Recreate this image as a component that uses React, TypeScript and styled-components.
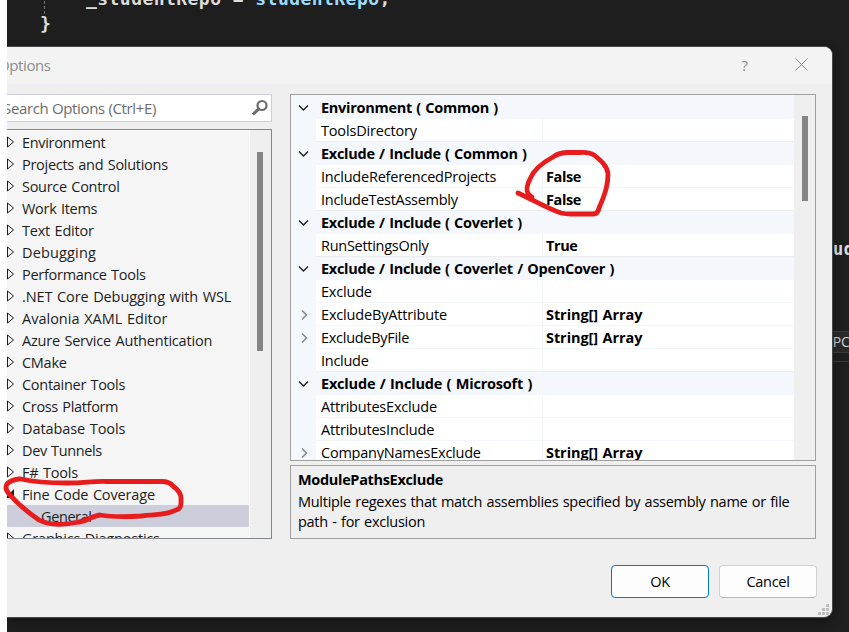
import React from "react";
import styled, { createGlobalStyle } from "styled-components";

const Global = createGlobalStyle`
  * { box-sizing: border-box; }
  html, body { margin: 0; background: #fff; overflow: hidden; }
  body { font-family: "Open Sans", "Noto Sans", sans-serif; font-size: 14.5px; color: #1e1e1e; }
`;

const Page = styled.main`
  position: relative;
  width: 849px;
  height: 632px;
  padding-left: 7px;
  overflow: hidden;
  background: #fff;
`;

const Editor = styled.div`
  position: relative;
  height: 632px;
  background: #1e1e1e;
  overflow: hidden;
`;

const Code = styled.div<{ $x: number; $y: number; $size?: number }>`
  position: absolute;
  left: ${(p) => p.$x}px;
  top: ${(p) => p.$y}px;
  font: 600 ${(p) => p.$size ?? 18}px/24px "DejaVu Sans Mono", monospace;
  letter-spacing: 0.45px;
  color: #dcdcdc;
  white-space: pre;
`;

const Variable = styled.span`
  color: #9cdcfe;
`;

const Guide = styled.div`
  position: absolute;
  left: 37px;
  top: 1px;
  height: 13px;
  border-left: 1px dashed #777;
`;

const Hint = styled.div`
  position: absolute;
  left: 800px;
  top: 331px;
  width: 42px;
  height: 22px;
  padding-left: 18px;
  border: solid #3b3b3e;
  border-width: 1px 0;
  background: #292929;
  color: #d0d0d0;
  font-size: 14px;
  line-height: 20px;
`;

const EditorRule = styled.div`
  position: absolute;
  left: 800px;
  top: 361px;
  width: 42px;
  height: 60px;
  border: solid #3b3b3e;
  border-width: 1px 0 0;
`;

const Dialog = styled.section`
  position: absolute;
  left: 0;
  top: 46px;
  width: 826px;
  height: 572px;
  border: solid #48484a;
  border-width: 1px 1px 1px 0;
  border-radius: 0 9px 9px 0;
  background: #efefef;
  overflow: hidden;
  box-shadow: 0 3px 10px rgba(0, 0, 0, 0.35);
`;

const TitleBar = styled.header`
  display: flex;
  align-items: center;
  height: 37px;
  padding-bottom: 2px;
  background: #f3f3f3;
  color: #8c8c8c;
  font-size: 15px;
`;

const Title = styled.h1`
  flex: 1;
  margin: 0 0 0 -9px;
  font-size: 15px;
  font-weight: 400;
  letter-spacing: -0.4px;
`;

const TitleButtons = styled.div`
  display: flex;
  align-items: center;
  gap: 47px;
  padding-right: 24px;
`;

const Body = styled.div`
  display: grid;
  grid-template-columns: 265px 526px;
  column-gap: 18px;
  padding-top: 10px;
`;

const Side = styled.div`
  display: flex;
  flex-direction: column;
  gap: 7px;
`;

const Search = styled.label`
  display: flex;
  align-items: center;
  justify-content: space-between;
  height: 28px;
  padding-right: 2px;
  border: 1px solid #ccceda;
  border-left: 0;
  background: #fff;
  color: #6c6c6c;
`;

const SearchText = styled.span`
  margin-left: -4px;
  font-size: 15px;
  letter-spacing: -0.35px;
`;

const Tree = styled.div`
  display: flex;
  height: 410px;
  border: 1px solid #828790;
  border-left: 0;
  background: #f5f5f5;
  overflow: hidden;
`;

const TreeList = styled.ul`
  width: 243px;
  margin: 0;
  padding: 1px 0 0;
  border-right: 1px solid #fff;
  list-style: none;
`;

const TreeRow = styled.li<{ $selected?: boolean; $child?: boolean }>`
  display: flex;
  align-items: center;
  height: 22px;
  padding-left: ${(p) => (p.$child ? 34 : 0)}px;
  background: ${(p) => (p.$selected ? "#cccedb" : "transparent")};
`;

const TreeIcon = styled.svg`
  width: 15px;
  height: 14px;
  flex: none;
`;

const Label = styled.span<{ $track?: number }>`
  letter-spacing: ${(p) => p.$track ?? -0.28}px;
  word-spacing: 0.9px;
  white-space: nowrap;
`;

const Track = styled.div<{ $pad: number; $left: number }>`
  flex: 1;
  padding: ${(p) => p.$pad}px 0 0 ${(p) => p.$left}px;
  background: #efefef;
`;

const Thumb = styled.div<{ $h: number }>`
  width: 6px;
  height: ${(p) => p.$h}px;
  background: #858585;
`;

const Details = styled.div`
  display: flex;
  flex-direction: column;
  gap: 4px;
`;

const Grid = styled.div`
  display: flex;
  height: 367px;
  border: 1px solid #a0a0a0;
  background: #fff;
  color: #000;
  overflow: hidden;
`;

const GridRows = styled.div`
  width: 503px;
  flex: none;
  padding-top: 1px;
  background: linear-gradient(#f4f7fc 1px, #fff 1px);
`;

const GridRow = styled.div<{ $category?: boolean }>`
  display: grid;
  grid-template-columns: 25px ${(p) => (p.$category ? "1fr" : "226px 1fr")};
  height: 23px;
  line-height: 24px;
  background: ${(p) => (p.$category ? "#f4f7fc" : "#fff")};
  font-weight: ${(p) => (p.$category ? 700 : 400)};
`;

const Gutter = styled.div`
  display: flex;
  align-items: center;
  justify-content: center;
  background: #f4f7fc;
`;

const Cell = styled.div<{ $line?: string }>`
  height: 23px;
  padding-left: 5px;
  border-bottom: ${(p) => (p.$line ? `1px solid ${p.$line}` : "0")};
  white-space: nowrap;
`;

const Value = styled(Cell)`
  padding-left: 3px;
  border-left: 1px solid #f1f4f9;
  font-weight: 700;
`;

const Description = styled.div`
  height: 74px;
  padding: 4px 7px;
  border: 1px solid #a0a0a0;
  color: #000;
  line-height: 20px;
`;

const DescTitle = styled.div`
  font-weight: 700;
  height: 22px;
  letter-spacing: -0.33px;
`;

const Footer = styled.footer`
  display: flex;
  justify-content: flex-end;
  gap: 10px;
  padding: 26px 15px 0 0;
`;

const Button = styled.button<{ $primary?: boolean }>`
  width: 98px;
  height: 33px;
  padding: 0;
  border: 1px solid ${(p) => (p.$primary ? "#0078d4" : "#cfcfcf")};
  border-bottom-color: ${(p) => (p.$primary ? "#0078d4" : "#b8b8b8")};
  border-radius: 4px;
  background: #fdfdfd;
  color: #000;
  font: inherit;
  letter-spacing: -0.3px;
`;

const Grip = styled.svg`
  position: absolute;
  right: 3px;
  bottom: 2px;
`;

const Ink = styled.svg`
  position: absolute;
  left: 0;
  top: 0;
  pointer-events: none;
`;

type Entry = { text: string; track?: number; open?: boolean; child?: boolean };
const tree: Entry[] = [
  { text: "Environment", track: -0.33 },
  { text: "Projects and Solutions" },
  { text: "Source Control" },
  { text: "Work Items" },
  { text: "Text Editor", track: -0.2 },
  { text: "Debugging", track: 0.15 },
  { text: "Performance Tools" },
  { text: ".NET Core Debugging with WSL", track: -0.09 },
  { text: "Avalonia XAML Editor", track: 0 },
  { text: "Azure Service Authentication", track: -0.2 },
  { text: "CMake" },
  { text: "Container Tools" },
  { text: "Cross Platform", track: -0.33 },
  { text: "Database Tools", track: -0.08 },
  { text: "Dev Tunnels", track: -0.37 },
  { text: "F# Tools", track: -0.2 },
  { text: "Fine Code Coverage", track: -0.15 },
  { text: "General", child: true, track: -0.4 },
  { text: "Graphics Diagnostics", track: -0.2 },
].map((e) => (e.text === "Fine Code Coverage" ? { ...e, open: true } : e));

type Property = { name: string; track?: number; category?: boolean; value?: string; expand?: boolean };
const properties: Property[] = [
  { name: "Environment ( Common )", category: true },
  { name: "ToolsDirectory", track: -0.17 },
  { name: "Exclude / Include ( Common )", category: true },
  { name: "IncludeReferencedProjects", value: "False", track: -0.22 },
  { name: "IncludeTestAssembly", value: "False" },
  { name: "Exclude / Include ( Coverlet )", category: true },
  { name: "RunSettingsOnly", value: "True" },
  { name: "Exclude / Include ( Coverlet / OpenCover )", category: true },
  { name: "Exclude", track: -0.2 },
  { name: "ExcludeByAttribute", value: "String[] Array", expand: true, track: -0.17 },
  { name: "ExcludeByFile", value: "String[] Array", expand: true },
  { name: "Include" },
  { name: "Exclude / Include ( Microsoft )", category: true, track: -0.2 },
  { name: "AttributesExclude", track: -0.2 },
  { name: "AttributesInclude", track: -0.2 },
  { name: "CompanyNamesExclude", value: "String[] Array", expand: true, track: -0.22 },
];

function Expander({ open }: { open?: boolean }) {
  return (
    <TreeIcon viewBox="0 0 15 14">
      {open ? <path d="M7 2v9H-2z" fill="#1e1e1e" /> : <path d="M.5 2v10L6.500 7z" fill="none" stroke="#1e1e1e" />}
    </TreeIcon>
  );
}

function Chevron({ down }: { down?: boolean }) {
  return (
    <svg width="14" height="14" viewBox="0 0 14 14" fill="none" strokeWidth="1.5">
      {down ? <path d="M2 4.500 6.500 9 11 4.500" stroke="#222" /> : <path d="M5 2.500 9.500 7 5 11.500" stroke="#858585" />}
    </svg>
  );
}

export default function App() {
  return (
    <Page>
      <Global />
      <Editor>
        <Guide />
        <Code $x={79} $y={-13}>_studentRepo = <Variable>studentRepo</Variable>;</Code>
        <Code $x={33} $y={12}>{"}"}</Code>
        <Code $x={826} $y={237} $size={17}>ud</Code>
        <Hint>SPC</Hint>
        <EditorRule />
        <Dialog>
          <TitleBar>
            <Title>Options</Title>
            <TitleButtons>
              <span>?</span>
              <svg width="13" height="13" viewBox="0 0 13 13" stroke="#8c8c8c">
                <path d="m.5.500 12 12m0-12-12 12" />
              </svg>
            </TitleButtons>
          </TitleBar>
          <Body>
            <Side>
              <Search>
                <SearchText>Search Options (Ctrl+E)</SearchText>
                <svg width="18" height="18" viewBox="0 0 18 18" fill="none" stroke="#6b6b6b">
                  <circle cx="11" cy="6.500" r="4.500" strokeWidth="2.200" />
                  <path d="m7.800 9.800-6 5.700" strokeWidth="3" />
                </svg>
              </Search>
              <Tree>
                <TreeList>
                  {tree.map((e) => (
                    <TreeRow key={e.text} $child={e.child} $selected={e.child}>
                      {!e.child && <Expander open={e.open} />}
                      <Label $track={e.track}>{e.text}</Label>
                    </TreeRow>
                  ))}
                </TreeList>
                <Track $pad={22} $left={7}><Thumb $h={199} /></Track>
              </Tree>
            </Side>
            <Details>
              <Grid>
                <GridRows>
                  {properties.map((p, i) => {
                    const line = properties[i + 1]?.category ? "#eceef1" : "#f3f6fb";
                    return (
                      <GridRow key={p.name} $category={p.category}>
                        <Gutter>{(p.category || p.expand) && <Chevron down={p.category} />}</Gutter>
                        <Cell $line={p.category ? undefined : line}><Label $track={p.track}>{p.name}</Label></Cell>
                        {!p.category && <Value $line={line}><Label $track={p.expand ? -0.08 : -0.4}>{p.value}</Label></Value>}
                      </GridRow>
                    );
                  })}
                </GridRows>
                <Track $pad={21} $left={8}><Thumb $h={85} /></Track>
              </Grid>
              <Description>
                <DescTitle>ModulePathsExclude</DescTitle>
                <Label>Multiple regexes that match assemblies specified by assembly name or file<br />path - for exclusion</Label>
              </Description>
            </Details>
          </Body>
          <Footer>
            <Button $primary>OK</Button>
            <Button>Cancel</Button>
          </Footer>
          <Grip width="11" height="11" viewBox="0 0 11 11" fill="#bdbdbd">
            <path d="M8 0h3v3H8zM4 4h3v3H4zM8 4h3v3H8zM0 8h3v3H0zM4 8h3v3H4zM8 8h3v3H8z" />
          </Grip>
        </Dialog>
      </Editor>
      <Ink width="849" height="632" viewBox="0 0 849 632" fill="none" stroke="#e81c1c" strokeWidth="4.800" strokeLinecap="round" strokeLinejoin="round">
        <path d="M518 193C535 201 549 209 561 213Q565 214 571 214H593Q598 214 599 208C606 192 608 184 608 174C607 165 600 160 594 155Q589 152 580 152.500H567Q558 153 553 157C540 164 533 171 530 179C526 187 525 193 532 197" />
        <path d="M21 479C34 482 49 483 67 483C86 483 91 481 107 481.500H163Q170 482 173 486Q181 492 181 498V503Q181 509 176 510C167 515 158 514 141 516C126 517 112 517 100 515C92 516 87 521 79 522C65 525 50 526 39 520C26 511 17 503 10 495Q4 489 7 484Q11 480 19 479" />
      </Ink>
    </Page>
  );
}
